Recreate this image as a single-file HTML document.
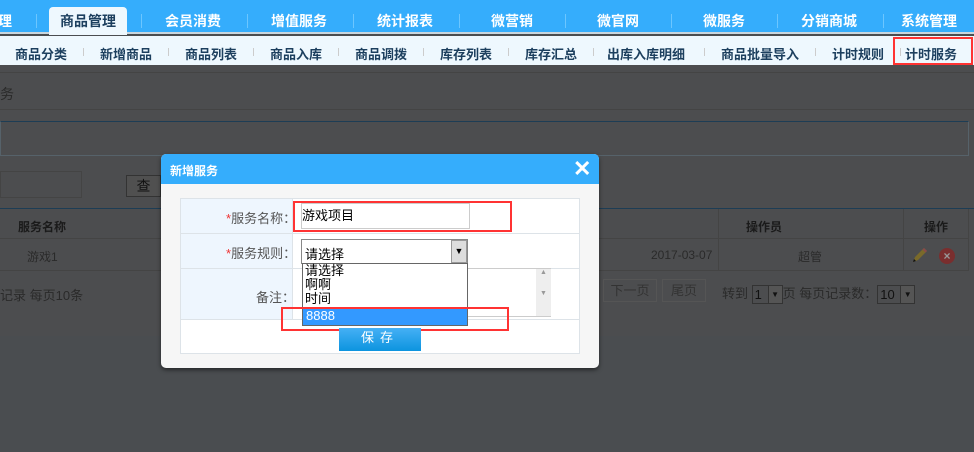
<!DOCTYPE html>
<html><head><meta charset="utf-8"><style>
*{margin:0;padding:0;box-sizing:border-box}
body{width:974px;height:452px;overflow:hidden;position:relative;background:#4a4d50;font-family:"Liberation Sans","Noto Sans CJK SC",sans-serif;font-size:12px}
.a{position:absolute}
.top{left:0;top:0;width:974px;height:34px;background:#35adfc;border-bottom:2px solid #c9d6de}
.top span{position:absolute;top:11px;color:#fff;font-weight:bold;font-size:14px;transform:translateX(-50%);white-space:nowrap}
.top i{position:absolute;top:14px;width:1px;height:14px;background:#6cc6ff}
.tab{left:49px;top:7px;width:78px;height:28px;background:#eef8fe;border-radius:4px 4px 0 0}
.sub{left:0;top:36px;width:974px;height:29px;background:#eef8fe}
.sub span{position:absolute;top:8px;color:#1c3f5e;font-weight:bold;font-size:13px;transform:translateX(-50%);white-space:nowrap}
.sub i{position:absolute;top:12px;width:1px;height:8px;background:#ccc}
.cont{left:0;top:65px;width:974px;height:271px;background:#4c4d4f}
.t{color:#2a2a2a}
.dlg{left:161px;top:154px;width:438px;height:214px;background:#f6f6f6;border-radius:5px;box-shadow:0 2px 4px rgba(0,0,0,.5);overflow:hidden}
.hd{left:0;top:0;width:438px;height:30px;background:#35adfc}
.sel{display:inline-block;position:relative;height:19px;border:1px solid #333;vertical-align:middle;font-size:13px;line-height:17px;color:#111;padding-left:2px}
.sel b{position:absolute;right:0;top:0;width:14px;height:17px;background:#555;border-left:1px solid #333;font-size:8px;text-align:center;line-height:17px;color:#111;font-weight:normal}
</style></head><body>
<div class="a top">
<div class="a tab"></div>
<span style="left:5px">理</span>
<span style="left:88px;color:#1c3f5e">商品管理</span>
<span style="left:193px">会员消费</span>
<span style="left:299px">增值服务</span>
<span style="left:405px">统计报表</span>
<span style="left:512px">微营销</span>
<span style="left:618px">微官网</span>
<span style="left:724px">微服务</span>
<span style="left:829px">分销商城</span>
<span style="left:929px">系统管理</span>
<i style="left:36px"></i><i style="left:141px"></i><i style="left:247px"></i><i style="left:353px"></i><i style="left:459px"></i><i style="left:565px"></i><i style="left:671px"></i><i style="left:777px"></i><i style="left:883px"></i>
</div>
<div class="a sub">
<span style="left:41px">商品分类</span><i style="left:83px"></i>
<span style="left:126px">新增商品</span><i style="left:168px"></i>
<span style="left:211px">商品列表</span><i style="left:253px"></i>
<span style="left:296px">商品入库</span><i style="left:338px"></i>
<span style="left:381px">商品调拨</span><i style="left:423px"></i>
<span style="left:466px">库存列表</span><i style="left:508px"></i>
<span style="left:551px">库存汇总</span><i style="left:593px"></i>
<span style="left:646px">出库入库明细</span><i style="left:704px"></i>
<span style="left:760px">商品批量导入</span><i style="left:815px"></i>
<span style="left:858px">计时规则</span><i style="left:900px"></i>
<span style="left:931px">计时服务</span>
<div class="a" style="left:893px;top:1px;width:80px;height:28px;border:2px solid #f33"></div>
</div>
<div class="a cont">
<div class="a" style="left:0;top:7px;width:974px;height:1px;background:#444"></div>
<div class="a t" style="left:0;top:19px;font-size:14px">务</div>
<div class="a" style="left:0;top:44px;width:974px;height:1px;background:#444"></div>
<div class="a" style="left:0;top:56px;width:969px;height:35px;border:1px solid #56626a;border-top:1px solid #1d3d55"></div>
<div class="a" style="left:0;top:106px;width:82px;height:27px;border:1px solid #444"></div>
<div class="a t" style="left:126px;top:110px;width:35px;height:22px;border:1px solid #333;background:#505050;font-size:14px;text-align:center;line-height:20px;color:#111">查</div>
<div class="a" style="left:0;top:143px;width:974px;height:1px;background:#1d3d55"></div>
<div class="a t" style="left:18px;top:153px;font-weight:bold;font-size:12px;color:#1a1a1a">服务名称</div>
<div class="a t" style="left:746px;top:153px;font-weight:bold;color:#1a1a1a">操作员</div>
<div class="a t" style="left:924px;top:153px;font-weight:bold;color:#1a1a1a">操作</div>
<div class="a" style="left:0;top:173px;width:968px;height:1px;background:#444"></div>
<div class="a" style="left:718px;top:144px;width:1px;height:62px;background:#444"></div>
<div class="a" style="left:903px;top:144px;width:1px;height:62px;background:#444"></div>
<div class="a" style="left:968px;top:144px;width:1px;height:62px;background:#444"></div>
<div class="a t" style="left:27px;top:183px">游戏1</div>
<div class="a t" style="left:651px;top:183px">2017-03-07</div>
<div class="a t" style="left:798px;top:183px">超管</div>
<svg class="a" style="left:911px;top:182px" width="17" height="17" viewBox="0 0 17 17"><path d="M2 15 L4 10 L13 1 L16 4 L7 13 Z" fill="#7a6a2a"/><path d="M13 1 L16 4 L14.5 5.5 L11.5 2.5Z" fill="#8a4a4a"/><path d="M2 15 L3 12 L5 14Z" fill="#111"/></svg>
<div class="a" style="left:939px;top:183px;width:16px;height:16px;border-radius:50%;background:#7a2e2e;color:#999;font-size:12px;text-align:center;line-height:16px;font-weight:bold">×</div>
<div class="a" style="left:0;top:205px;width:968px;height:1px;background:#444"></div>
<div class="a t" style="left:0;top:220px;font-size:13px">记录 每页10条</div>
<div class="a t" style="left:603px;top:214px;width:54px;height:23px;border:1px solid #555;text-align:center;line-height:21px;font-size:13px;color:#333">下一页</div>
<div class="a t" style="left:662px;top:214px;width:44px;height:23px;border:1px solid #555;text-align:center;line-height:21px;font-size:13px;color:#333">尾页</div>
<div class="a t" style="left:722px;top:218px;font-size:13px">转到 <span class="sel" style="width:31px">1<b>▼</b></span>页 每页记录数：<span class="sel" style="width:38px">10<b>▼</b></span></div>
</div>
<div class="a dlg">
<div class="a hd"></div>
<div class="a" style="left:9px;top:8px;color:#fff;font-weight:bold;font-size:12px">新增服务</div>
<div class="a" style="left:412px;top:2px;color:#fff;font-size:22px;font-weight:bold">✕</div>
<div class="a" style="left:19px;top:44px;width:400px;height:156px;background:#fff;border:1px solid #dde3e8"></div>
<div class="a" style="left:20px;top:45px;width:111px;height:120px;background:#eef6fe"></div>
<div class="a" style="left:20px;top:79px;width:398px;height:1px;background:#dde3e8"></div>
<div class="a" style="left:20px;top:114px;width:398px;height:1px;background:#dde3e8"></div>
<div class="a" style="left:20px;top:165px;width:398px;height:1px;background:#dde3e8"></div>
<div class="a" style="left:131px;top:45px;width:1px;height:120px;background:#dde3e8"></div>
<div class="a" style="left:65px;top:54px;color:#555;font-size:13px"><span style="color:#e33">*</span>服务名称：</div>
<div class="a" style="left:65px;top:89px;color:#555;font-size:13px"><span style="color:#e33">*</span>服务规则：</div>
<div class="a" style="left:95px;top:133px;color:#555;font-size:13px">备注：</div>
<div class="a" style="left:140px;top:49px;width:169px;height:26px;border:1px solid #ccc;background:#fff;font-size:13px;line-height:24px;color:#000">游戏项目</div>
<div class="a" style="left:132px;top:47px;width:219px;height:31px;border:2px solid #f33"></div>
<div class="a" style="left:306px;top:114px;width:84px;height:49px;border:1px solid #ccc;background:#fff"></div>
<div class="a" style="left:375px;top:115px;width:15px;height:47px;background:#eee;font-size:7px;color:#999;text-align:center">▲<br><br><br>▼</div>
<div class="a" style="left:140px;top:85px;width:167px;height:25px;border:1px solid #888;background:#fff;font-size:13px;line-height:30px;padding-left:3px;color:#000">请选择</div>
<div class="a" style="left:290px;top:86px;width:16px;height:23px;background:#ddd;border:1px solid #999;font-size:9px;text-align:center;line-height:21px">▼</div>
<div class="a" style="left:141px;top:109px;width:166px;height:63px;border:1px solid #666;background:#fff;font-size:13px;line-height:14px;color:#000">
<div style="padding-left:2px">请选择</div><div style="padding-left:2px">啊啊</div><div style="padding-left:2px">时间</div>
<div style="padding-left:3px;background:#3399ff;color:#fff;height:16px;margin-top:3px">8888</div></div>
<div class="a" style="left:120px;top:153px;width:228px;height:24px;border:2px solid #f33"></div>
<div class="a" style="left:178px;top:174px;width:82px;height:23px;background:linear-gradient(#45b0f5,#0c94df);color:#fff;font-size:13px;text-align:center;line-height:20px;letter-spacing:6px">保存</div>
</div>
</body></html>
